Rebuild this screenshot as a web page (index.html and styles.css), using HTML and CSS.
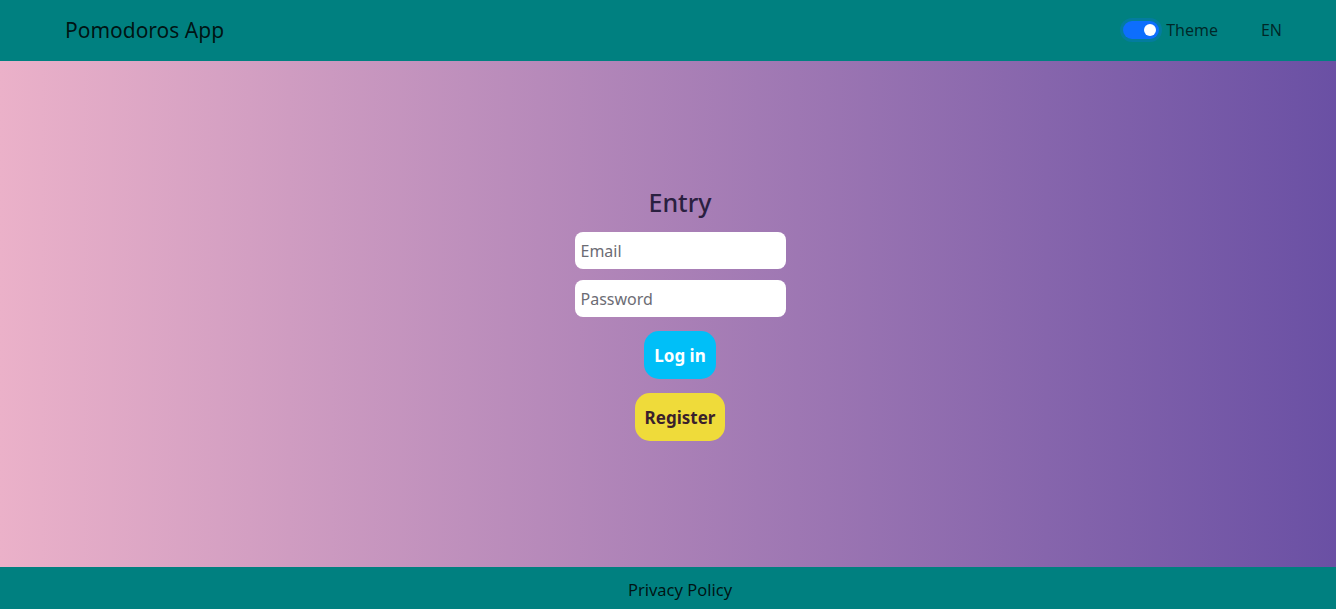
FILE: index.html
```html
<!DOCTYPE html>
<html lang="en">
<head>
<meta charset="utf-8">
<title>Pomodoros App</title>
<link rel="stylesheet" href="styles.css">
</head>
<body>
<div class="page">
  <header class="navbar">
    <div class="brand">Pomodoros App</div>
    <div class="nav-right">
      <label class="theme">
        <span class="switch"><span class="knob"></span></span>
        <span class="theme-label">Theme</span>
      </label>
      <span class="lang">EN</span>
    </div>
  </header>
  <main class="main">
    <form class="entry">
      <h1 class="title">Entry</h1>
      <input class="field" type="email" placeholder="Email">
      <input class="field" type="password" placeholder="Password">
      <button type="button" class="btn btn-login">Log in</button>
      <button type="button" class="btn btn-register">Register</button>
    </form>
  </main>
  <footer class="footer">Privacy Policy</footer>
</div>
</body>
</html>
```
FILE: styles.css
```css
* { box-sizing: border-box; }
html, body { margin: 0; height: 100%; }
body {
  font-family: "Noto Sans", "Open Sans", sans-serif;
  color: #212529;
}
.page {
  display: flex;
  flex-direction: column;
  height: 609px;
}
.navbar {
  height: 61px;
  flex: none;
  background: #008080;
  display: flex;
  align-items: center;
  justify-content: space-between;
  padding: 0 54px 0 65px;
}
.brand {
  font-size: 21px;
  color: rgba(0, 0, 0, 0.85);
  margin-top: -2px;
}
.nav-right {
  display: flex;
  align-items: center;
  gap: 43px;
  margin-top: -2px;
}
.theme {
  display: flex;
  align-items: center;
  gap: 7px;
}
.switch {
  width: 36px;
  height: 18px;
  border-radius: 9px;
  background: #0d6efd;
  box-shadow: 0 0 0 3px rgba(13, 110, 253, 0.25);
  display: flex;
  align-items: center;
  justify-content: flex-end;
  padding-right: 3px;
}
.knob {
  width: 12px;
  height: 12px;
  border-radius: 50%;
  background: #fff;
}
.theme-label, .lang {
  font-size: 16px;
  color: rgba(0, 0, 0, 0.7);
}
.main {
  flex: 1;
  background: linear-gradient(to right, #ebb1c9, #6a50a4);
  display: flex;
  align-items: center;
  justify-content: center;
  padding-left: 24px;
}
.entry {
  display: flex;
  flex-direction: column;
  align-items: center;
  margin-top: -1px;
}
.title {
  margin: 0 0 14px;
  font-size: 25px;
  font-weight: 500;
  color: #2a2040;
  line-height: 32px;
}
.field {
  width: 211px;
  height: 37px;
  border: none;
  border-radius: 8px;
  background: #fff;
  padding: 0 6px;
  font-family: inherit;
  font-size: 16px;
  margin-bottom: 11px;
  outline: none;
}
.field::placeholder { color: #6c6c74; }
.btn {
  height: 48px;
  border: none;
  border-radius: 15px;
  font-family: inherit;
  font-weight: 700;
  font-size: 17px;
  padding: 0 10px;
  cursor: pointer;
}
.btn-login {
  margin-top: 3px;
  background: #00bff8;
  color: #fff;
}
.btn-register {
  margin-top: 14px;
  background: #efdb3a;
  color: #3a1f2c;
}
.footer {
  height: 42px;
  flex: none;
  background: #008080;
  display: flex;
  align-items: center;
  justify-content: center;
  font-size: 16.5px;
  color: rgba(0, 0, 0, 0.85);
  padding-top: 3px;
  padding-left: 24px;
}
```
